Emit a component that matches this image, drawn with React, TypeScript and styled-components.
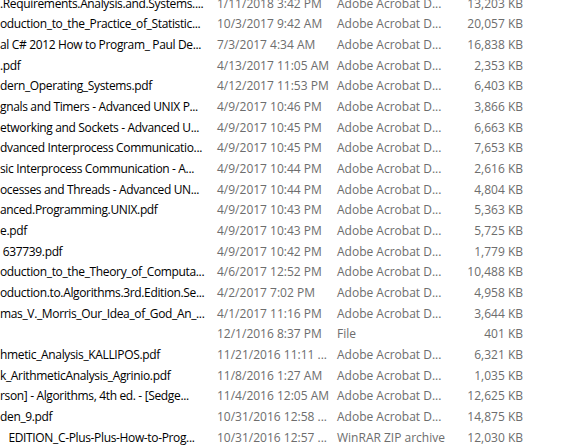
import styled, { createGlobalStyle } from 'styled-components'

const GlobalStyle = createGlobalStyle`
  html, body {
    margin: 0;
    padding: 0;
    background: #ffffff;
    overflow: hidden;
  }
`

const FileList = styled.div`
  width: 566px;
  height: 445px;
  overflow: hidden;
  font-family: 'Open Sans', 'Noto Sans', 'Liberation Sans', sans-serif;
  font-size: 12px;
`

// the list is scrolled a few pixels down, so the first row is half hidden
const Rows = styled.div`
  display: flex;
  flex-direction: column;
  margin-top: -7px;
`

const Row = styled.div`
  display: grid;
  grid-template-columns: 212px 120px 120px 76px;
  height: 20.67px;
  align-items: center;
`

const Cell = styled.span<{ align?: 'left' | 'right'; muted?: boolean }>`
  overflow: hidden;
  white-space: nowrap;
  text-align: ${(props) => props.align || 'left'};
  color: ${(props) => (props.muted ? '#6d6d6d' : '#000000')};
  padding-left: ${(props) => (props.align === 'right' ? '0' : '5px')};
  padding-right: ${(props) => (props.align === 'right' ? '5px' : '0')};
`

const NameCell = styled(Cell)`
  padding-left: 0;
  letter-spacing: -0.35px;
`

type FileRow = {
  name: string
  modified: string
  type: string
  size: string
}

const PDF = 'Adobe Acrobat D...'

const files: FileRow[] = [
  { name: '.Requirements.Analysis.and.Systems....', modified: '1/11/2018 3:42 PM', type: PDF, size: '13,203 KB' },
  { name: 'oduction_to_the_Practice_of_Statistic...', modified: '10/3/2017 9:42 AM', type: PDF, size: '20,057 KB' },
  { name: 'al C# 2012 How to Program_ Paul De...', modified: '7/3/2017 4:34 AM', type: PDF, size: '16,838 KB' },
  { name: '.pdf', modified: '4/13/2017 11:05 AM', type: PDF, size: '2,353 KB' },
  { name: 'dern_Operating_Systems.pdf', modified: '4/12/2017 11:53 PM', type: PDF, size: '6,403 KB' },
  { name: 'gnals and Timers - Advanced UNIX P...', modified: '4/9/2017 10:46 PM', type: PDF, size: '3,866 KB' },
  { name: 'etworking and Sockets - Advanced U...', modified: '4/9/2017 10:45 PM', type: PDF, size: '6,663 KB' },
  { name: 'dvanced Interprocess Communicatio...', modified: '4/9/2017 10:45 PM', type: PDF, size: '7,653 KB' },
  { name: 'sic Interprocess Communication - A...', modified: '4/9/2017 10:44 PM', type: PDF, size: '2,616 KB' },
  { name: 'ocesses and Threads - Advanced UN...', modified: '4/9/2017 10:44 PM', type: PDF, size: '4,804 KB' },
  { name: 'anced.Programming.UNIX.pdf', modified: '4/9/2017 10:43 PM', type: PDF, size: '5,363 KB' },
  { name: 'e.pdf', modified: '4/9/2017 10:43 PM', type: PDF, size: '5,725 KB' },
  { name: '\u00a0637739.pdf', modified: '4/9/2017 10:42 PM', type: PDF, size: '1,779 KB' },
  { name: 'oduction_to_the_Theory_of_Computa...', modified: '4/6/2017 12:52 PM', type: PDF, size: '10,488 KB' },
  { name: 'oduction.to.Algorithms.3rd.Edition.Se...', modified: '4/2/2017 7:02 PM', type: PDF, size: '4,958 KB' },
  { name: 'mas_V._Morris_Our_Idea_of_God_An_...', modified: '4/1/2017 11:16 PM', type: PDF, size: '3,644 KB' },
  { name: '', modified: '12/1/2016 8:37 PM', type: 'File', size: '401 KB' },
  { name: 'hmetic_Analysis_KALLIPOS.pdf', modified: '11/21/2016 11:11 ...', type: PDF, size: '6,321 KB' },
  { name: 'k_ArithmeticAnalysis_Agrinio.pdf', modified: '11/8/2016 1:27 AM', type: PDF, size: '1,035 KB' },
  { name: 'rson] - Algorithms, 4th ed. - [Sedge...', modified: '11/4/2016 12:05 AM', type: PDF, size: '12,625 KB' },
  { name: 'den_9.pdf', modified: '10/31/2016 12:58 ...', type: PDF, size: '14,875 KB' },
  { name: '\u2002\u00a0EDITION_C-Plus-Plus-How-to-Prog...', modified: '10/31/2016 12:57 ...', type: 'WinRAR ZIP archive', size: '12,030 KB' },
]

export default function App() {
  return (
    <>
      <GlobalStyle />
      <FileList>
        <Rows>
          {files.map((file, i) => (
            <Row key={i}>
              <NameCell>{file.name}</NameCell>
              <Cell muted>{file.modified}</Cell>
              <Cell muted>{file.type}</Cell>
              <Cell muted align="right">
                {file.size}
              </Cell>
            </Row>
          ))}
        </Rows>
      </FileList>
    </>
  )
}
